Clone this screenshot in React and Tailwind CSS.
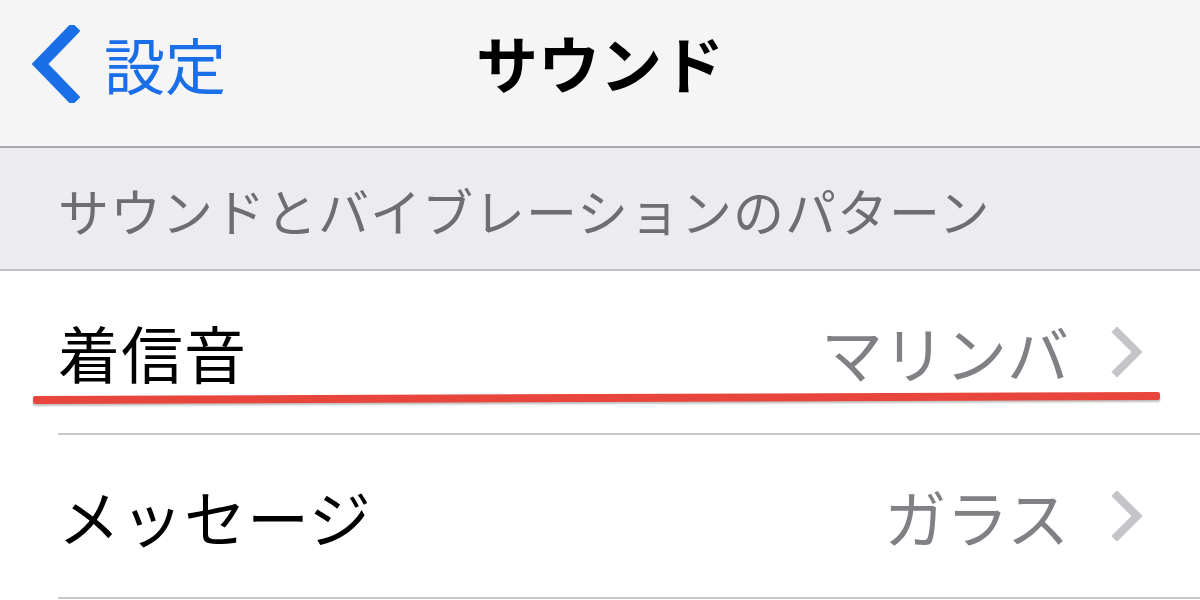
const ChevronRight = () => (
  <svg width="34" height="50" viewBox="0 0 34 50" className="shrink-0">
    <path
      d="M6 5 L26 25 L6 45"
      fill="none"
      stroke="#c4c4c9"
      strokeWidth="8"
      strokeLinecap="square"
      strokeLinejoin="miter"
    />
  </svg>
);

const Fila = ({ titulo, valor }) => (
  <div className="h-[164px] flex pl-[58px]">
    <div className="flex-1 flex items-center justify-between pr-[55px] border-b-2 border-[#c8c8cc]">
      <span className="text-[62px] leading-none text-black tracking-[1px]">{titulo}</span>
      <div className="flex items-center gap-[42px]">
        <span className="text-[62px] leading-none text-[#808085]">{valor}</span>
        <ChevronRight />
      </div>
    </div>
  </div>
);

export default function App() {
  return (
    <div className="relative w-[1200px] h-[600px] overflow-hidden bg-white font-['Noto_Sans_CJK_JP','Noto_Sans',sans-serif]">
      <div className="h-[148px] pb-[18px] bg-[#f5f5f5] border-b-2 border-[#a9a9ab] grid grid-cols-[1fr_auto_1fr] items-center">
        <div className="flex items-center pl-[30px] gap-[24px]">
          <svg width="50" height="78" viewBox="0 0 50 78">
            <path
              d="M42 6 L10 39 L42 72"
              fill="none"
              stroke="#1a6ee8"
              strokeWidth="12"
              strokeLinecap="square"
            />
          </svg>
          <span className="text-[61px] leading-none text-[#1a6ee8] -mt-[2px]">設定</span>
        </div>
        <span className="text-[62px] leading-none font-bold text-black -mt-[4px]">サウンド</span>
        <div />
      </div>

      <div className="h-[123px] bg-[#ebebf0] border-b-2 border-[#c0c0c5] flex items-center pl-[58px]">
        <span className="text-[51px] leading-none text-[#6d6d72] mt-[4px] tracking-[1px]">
          サウンドとバイブレーションのパターン
        </span>
      </div>

      <Fila titulo="着信音" valor="マリンバ" />
      <Fila titulo="メッセージ" valor="ガラス" />

      <div className="absolute left-[33px] top-[394px] w-[1127px] h-[8px] bg-[#e8453c] rounded-[2px] -rotate-[0.2deg] shadow-[0_2px_2px_rgba(0,0,0,0.25)]" />
    </div>
  );
}
